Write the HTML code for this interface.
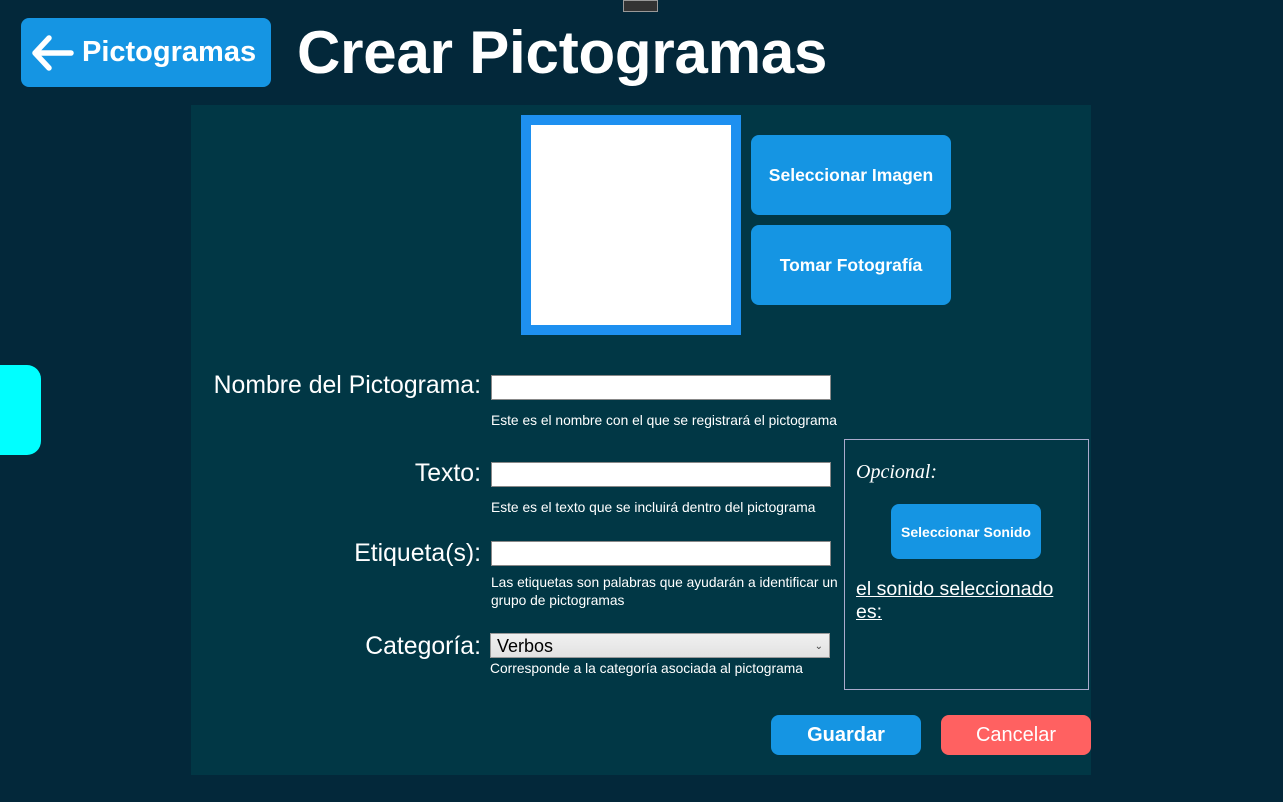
<!DOCTYPE html>
<html><head><meta charset="utf-8"><style>
body{margin:0;width:1283px;height:802px;background:#03283a;font-family:"Liberation Sans",sans-serif;position:relative;overflow:hidden;color:#fff}
.a{position:absolute}
.btn{position:absolute;background:#1595e3;border-radius:8px;color:#fff;font-weight:bold;display:flex;align-items:center;justify-content:center}
.lbl{position:absolute;right:802px;font-size:24.8px;text-align:right;white-space:nowrap}
.inp{position:absolute;left:491px;width:338px;height:23px;background:#fff;border:1px solid #888}
.hint{position:absolute;left:491px;font-size:13.8px}
</style></head><body>
<div class="a" style="left:623px;top:0;width:35px;height:12px;background:#333;border:1px solid #999;box-sizing:border-box"></div>
<div class="btn" style="left:21px;top:18px;width:250px;height:69px;font-size:29px;justify-content:flex-start">
<svg width="50" height="40" viewBox="0 0 50 40" style="margin:0 5px 0 6px"><path d="M44 20H8M22 5L8 20l14 15" stroke="#fff" stroke-width="5.5" fill="none" stroke-linecap="round" stroke-linejoin="round"/></svg>Pictogramas</div>
<div class="a" style="left:297px;top:18px;font-size:60px;font-weight:bold;letter-spacing:-0.2px">Crear Pictogramas</div>
<div class="a" style="left:0;top:365px;width:41px;height:90px;background:#00ffff;border-radius:0 14px 14px 0"></div>
<div class="a" style="left:191px;top:105px;width:900px;height:670px;background:#013745"></div>
<div class="a" style="left:521px;top:115px;width:200px;height:200px;background:#fff;border:10px solid #1e90f0"></div>
<div class="btn" style="left:751px;top:135px;width:200px;height:80px;font-size:17.5px">Seleccionar Imagen</div>
<div class="btn" style="left:751px;top:225px;width:200px;height:80px;font-size:17.5px">Tomar Fotografía</div>
<div class="lbl" style="top:372px">Nombre del Pictograma:</div>
<div class="inp" style="top:375px"></div>
<div class="hint" style="top:413px">Este es el nombre con el que se registrará el pictograma</div>
<div class="lbl" style="top:460px">Texto:</div>
<div class="inp" style="top:462px"></div>
<div class="hint" style="top:500px">Este es el texto que se incluirá dentro del pictograma</div>
<div class="lbl" style="top:540px">Etiqueta(s):</div>
<div class="inp" style="top:541px"></div>
<div class="hint" style="top:574px;width:352px;line-height:18px">Las etiquetas son palabras que ayudarán a identificar un grupo de pictogramas</div>
<div class="lbl" style="top:633px">Categoría:</div>
<div class="a" style="left:490px;top:633px;background:linear-gradient(#f0f0f0,#e2e2e2);border:1px solid #999;color:#000;font-size:18px;line-height:25px;padding-left:6px;box-sizing:border-box;width:340px;height:25px">Verbos<span style="position:absolute;right:6px;font-size:10px;color:#444">⌄</span></div>
<div class="hint" style="left:490px;top:661px">Corresponde a la categoría asociada al pictograma</div>
<div class="a" style="left:844px;top:439px;width:243px;height:249px;border:1px solid #aac"></div>
<div class="a" style="left:856px;top:461px;font-size:20px;font-style:italic;font-family:'Liberation Serif',serif">Opcional:</div>
<div class="btn" style="left:891px;top:504px;width:150px;height:55px;font-size:14px">Seleccionar Sonido</div>
<div class="a" style="left:856px;top:578px;width:220px;font-size:19.5px;text-decoration:underline;line-height:23px">el sonido seleccionado es:</div>
<div class="btn" style="left:771px;top:715px;width:150px;height:40px;font-size:20px">Guardar</div>
<div class="btn" style="left:941px;top:715px;width:150px;height:40px;font-size:20px;background:#ff6161;font-weight:normal">Cancelar</div>
</body></html>
